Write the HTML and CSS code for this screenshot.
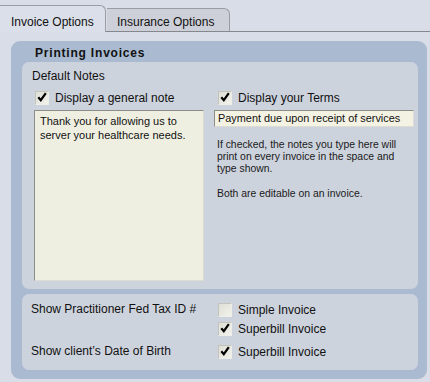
FILE: index.html
```html
<!DOCTYPE html>
<html lang="en">
<head>
    <meta charset="UTF-8">
    <title>Invoice Options</title>
    <link rel="stylesheet" href="styles.css">
</head>
<body>

    <!-- Tabs -->
    <div class="tabs">
        <div class="tab active">Invoice Options</div>
        <div class="tab">Insurance Options</div>
    </div>

    <div class="panel">
        <h2 class="panel-title">Printing Invoices</h2>

        <!-- Default notes -->
        <div class="group notes">
            <div class="group-label">Default Notes</div>
            <div class="notes-grid">
                <div class="col">
                    <label class="check-row left"><span class="box checked"></span>Display a general note</label>
                    <div class="field note-area">Thank you for allowing us to server your healthcare needs.</div>
                </div>
                <div class="col">
                    <label class="check-row right"><span class="box checked"></span>Display your Terms</label>
                    <div class="field terms">Payment due upon receipt of services</div>
                    <p class="help">If checked, the notes you type here will print on every invoice in the space and type shown.</p>
                    <p class="help">Both are editable on an invoice.</p>
                </div>
            </div>
        </div>

        <!-- Show options -->
        <div class="group shows">
            <div class="show-row">
                <span class="show-label">Show Practitioner Fed Tax ID #</span>
                <div class="show-opts">
                    <label class="check-row"><span class="box"></span>Simple Invoice</label>
                    <label class="check-row"><span class="box checked"></span>Superbill Invoice</label>
                </div>
            </div>
            <div class="show-row">
                <span class="show-label">Show client’s Date of Birth</span>
                <div class="show-opts">
                    <label class="check-row"><span class="box checked"></span>Superbill Invoice</label>
                </div>
            </div>
        </div>
    </div>

</body>
</html>
```

FILE: styles.css
```css
/* Basic Reset */
* {
    margin: 0;
    padding: 0;
    box-sizing: border-box;
}

body {
    font-family: 'Liberation Sans', Arial, sans-serif;
    font-size: 12px;
    color: #111;
    background: #d9dde8;
    width: 430px;
    height: 382px;
    overflow: hidden;
}

/* Tabs */
.tabs {
    display: flex;
    align-items: flex-end;
    height: 32px;
    padding-top: 6px;
    border-bottom: 1px solid #85878c;
}

.tab {
    height: 23px;
    padding: 0 0 0 10px;
    width: 123px;
    line-height: 26px;
    background: #cdd0d8;
    border: 1px solid #9a9ca2;
    border-bottom: none;
    border-left: none;
    border-radius: 0 6px 0 0;
    margin-left: 1px;
}

.tab.active {
    width: 106px;
    height: 27px;
    margin-left: 0;
    margin-bottom: -1px;
    padding-left: 11px;
    line-height: 32px;
    background: #dbdfe9;
    border-left: none;
}

/* Outer panel */
.panel {
    margin: 9px 3px 0 11px;
    height: 338px;
    background: #aabbd1;
    border-radius: 9px;
    padding: 0 9px 9px 11px;
    display: flex;
    flex-direction: column;
}

.panel-title {
    font-size: 12px;
    font-weight: bold;
    letter-spacing: 0.8px;
    padding: 5px 0 0 13px;
    height: 21px;
    line-height: 14px;
}

.group {
    background: #cdd3dd;
    border-radius: 7px;
}

/* Default notes group */
.notes {
    height: 227px;
    padding: 7px 4px 0 10px;
}

.group-label {
    line-height: 14px;
    height: 16px;
}

.notes-grid {
    display: grid;
    grid-template-columns: 170px 200px;
    column-gap: 10px;
    margin-left: 2px;
}

.check-row {
    display: flex;
    align-items: center;
    height: 19px;
}

.check-row.left {
    padding-left: 1px;
    height: 25px;
    padding-top: 1px;
}

.check-row.right {
    padding-left: 4px;
    height: 25px;
    padding-top: 1px;
}

.box {
    width: 14px;
    height: 14px;
    margin-right: 6px;
    background: linear-gradient(135deg, #dedfd6, #f2f2ea);
    border: 1px solid;
    border-color: #c4c4bd #eeeee8 #eeeee8 #c4c4bd;
    flex-shrink: 0;
}

.box.checked {
    background-image: url("data:image/svg+xml,%3Csvg xmlns='http://www.w3.org/2000/svg' viewBox='0 0 12 12'%3E%3Cpath d='M2.3 5.3 L4.8 8.2 L9.8 1.2' fill='none' stroke='%23000' stroke-width='2.2'/%3E%3C/svg%3E"),
                      linear-gradient(135deg, #dedfd6, #f2f2ea);
    background-size: 12px 12px, 100% 100%;
    background-position: center, 0 0;
    background-repeat: no-repeat;
}

.field {
    border: 1px solid;
    border-color: #8d8d8a #dcdcd4 #dcdcd4 #8d8d8a;
}

.note-area {
    height: 171px;
    background: #efefe1;
    padding: 3px 5px;
    font-size: 11px;
    line-height: 14px;
}

.terms {
    height: 17px;
    background: #f4f3e3;
    padding: 0 3px;
    font-size: 10.9px;
    line-height: 15px;
    white-space: nowrap;
}

.help {
    font-size: 10.4px;
    line-height: 12px;
    padding: 12px 6px 0 3px;
    color: #1a1a1a;
}

.help + .help {
    padding-top: 13px;
}

/* Show options group */
.shows {
    margin-top: 5px;
    height: 76px;
    padding: 6px 0 0 9px;
}

.show-row {
    display: flex;
    margin-bottom: 4px;
}

.show-label {
    width: 187px;
    line-height: 19px;
}

.show-opts {
    display: flex;
    flex-direction: column;
}
```
